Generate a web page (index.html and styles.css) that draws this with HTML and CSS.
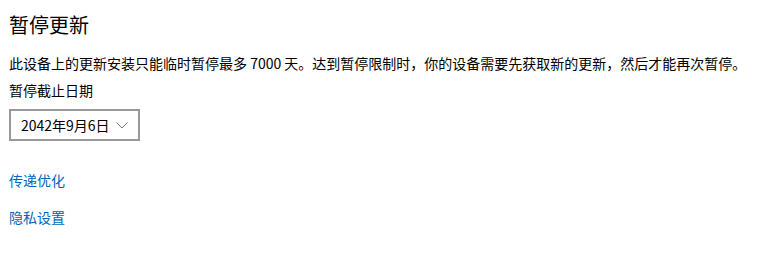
FILE: index.html
```html
<!DOCTYPE html>
<html lang="zh-CN">
<head>
<meta charset="utf-8">
<link rel="stylesheet" href="styles.css">
</head>
<body>
<div class="page">
  <h1 class="title">暂停更新</h1>
  <p class="desc">此设备上的更新安装只能临时暂停最多 7000 天。达到暂停限制时，你的设备需要先获取新的更新，然后才能再次暂停。</p>
  <div class="label">暂停截止日期</div>
  <div class="select">
    <span class="select-text">2042年9月6日</span>
    <svg class="chev" width="12" height="7" viewBox="0 0 12 7"><path d="M0.5 0.5 L6 6 L11.5 0.5" fill="none" stroke="#7a7a7a" stroke-width="1"/></svg>
  </div>
  <a class="link link-first" href="#">传递优化</a>
  <a class="link link-second" href="#">隐私设置</a>
</div>
</body>
</html>
```

FILE: styles.css
```css
html, body {
  margin: 0;
  padding: 0;
  background: #ffffff;
}
body {
  font-family: "Noto Sans CJK SC", "Noto Sans", sans-serif;
  color: #000000;
  width: 778px;
  height: 277px;
  overflow: hidden;
}
.page {
  display: flex;
  flex-direction: column;
  align-items: flex-start;
  padding-left: 9px;
}
.title {
  margin: 11px 0 0 0;
  font-size: 20px;
  font-weight: 400;
  line-height: 28px;
}
.desc {
  margin: 14px 0 0 0;
  font-size: 14px;
  line-height: 20px;
  white-space: nowrap;
}
.label {
  margin-top: 7px;
  font-size: 14px;
  line-height: 20px;
}
.select {
  margin-top: 9px;
  box-sizing: border-box;
  width: 131px;
  height: 32px;
  border: 2px solid #999999;
  display: flex;
  align-items: center;
  justify-content: space-between;
  padding: 0 10px 0 10px;
}
.select-text {
  font-size: 14px;
  line-height: 20px;
}
.chev {
  display: block;
  margin-top: 1px;
}
.link {
  font-size: 14px;
  line-height: 20px;
  color: #0067b8;
  text-decoration: none;
}
.link-first {
  margin-top: 29px;
}
.link-second {
  margin-top: 17px;
}
```
